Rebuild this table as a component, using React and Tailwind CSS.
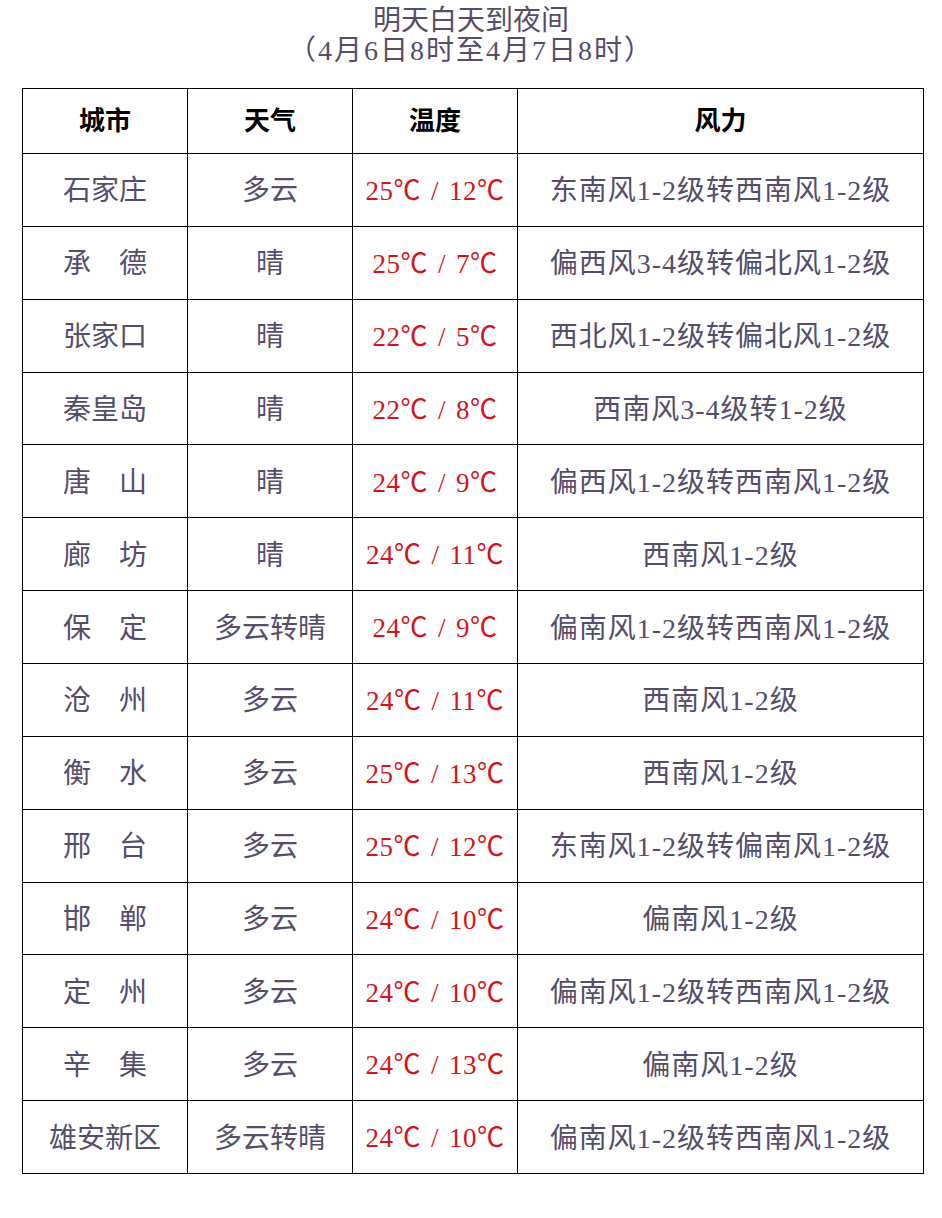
import React from "react";

const rows = [
  ["石家庄", "多云", "25℃", "12℃", "东南风1-2级转西南风1-2级"],
  ["承　德", "晴", "25℃", "7℃", "偏西风3-4级转偏北风1-2级"],
  ["张家口", "晴", "22℃", "5℃", "西北风1-2级转偏北风1-2级"],
  ["秦皇岛", "晴", "22℃", "8℃", "西南风3-4级转1-2级"],
  ["唐　山", "晴", "24℃", "9℃", "偏西风1-2级转西南风1-2级"],
  ["廊　坊", "晴", "24℃", "11℃", "西南风1-2级"],
  ["保　定", "多云转晴", "24℃", "9℃", "偏南风1-2级转西南风1-2级"],
  ["沧　州", "多云", "24℃", "11℃", "西南风1-2级"],
  ["衡　水", "多云", "25℃", "13℃", "西南风1-2级"],
  ["邢　台", "多云", "25℃", "12℃", "东南风1-2级转偏南风1-2级"],
  ["邯　郸", "多云", "24℃", "10℃", "偏南风1-2级"],
  ["定　州", "多云", "24℃", "10℃", "偏南风1-2级转西南风1-2级"],
  ["辛　集", "多云", "24℃", "13℃", "偏南风1-2级"],
  ["雄安新区", "多云转晴", "24℃", "10℃", "偏南风1-2级转西南风1-2级"],
];

const font = "font-['Liberation_Serif','Noto_Sans_CJK_SC',serif]";

export default function App() {
  return (
    <div className={`w-[942px] h-[1218px] bg-white ${font}`}>
      <div className="pt-[6px] flex flex-col items-center text-[#554e6a] text-[28px] leading-[30px]">
        <div>明天白天到夜间</div>
        <div className="tracking-[2px]">（4月6日8时至4月7日8时）</div>
      </div>
      <table className="mt-[22px] ml-[22px] w-[901px] border-collapse table-fixed">
        <colgroup>
          <col className="w-[165px]" />
          <col className="w-[165px]" />
          <col className="w-[165px]" />
          <col className="w-[406px]" />
        </colgroup>
        <thead>
          <tr className="h-[65px] text-[26px] font-bold text-black">
            <th className="border-[1.5px] border-black">城市</th>
            <th className="border-[1.5px] border-black">天气</th>
            <th className="border-[1.5px] border-black">温度</th>
            <th className="border-[1.5px] border-black">风力</th>
          </tr>
        </thead>
        <tbody>
          {rows.map((r, i) => (
            <tr key={i} className="h-[72.86px] text-[28px] text-center">
              <td className="border-[1.5px] border-black text-[#554e6a] pt-[3px]">{r[0]}</td>
              <td className="border-[1.5px] border-black text-[#554e6a] pt-[3px]">{r[1]}</td>
              <td className="border-[1.5px] border-black text-[#d4141c] text-[27px] pt-[3px] tracking-[0.5px]">
                {r[2]}
                <span className="mx-[10px]">/</span>
                {r[3]}
              </td>
              <td className="border-[1.5px] border-black text-[#554e6a] tracking-[1px] pt-[3px]">{r[4]}</td>
            </tr>
          ))}
        </tbody>
      </table>
    </div>
  );
}
